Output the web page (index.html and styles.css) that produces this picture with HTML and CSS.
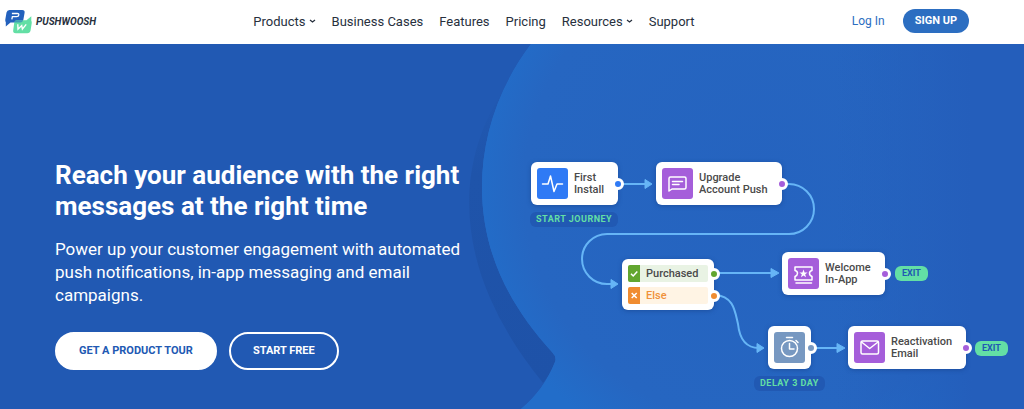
FILE: index.html
```html
<!DOCTYPE html>
<html lang="en">
  <head>
    <meta charset="UTF-8" />
    <meta name="viewport" content="width=device-width, initial-scale=1.0" />
    <title>Pushwoosh</title>
    <link rel="stylesheet" href="styles.css">
  </head>
  <body>
    <header class="header">
      <a class="logo" href="#">
        <svg class="logo-mark" viewBox="0 0 27 25" aria-hidden="true">
          <path d="M4.500 1H17.200Q20 1 19.600 3.800L18.400 10.600Q17.900 13.500 15 13.500H5.500L.8 17.400V13.200Q0 12.500.3 10.600L1.500 3.600Q2 1 4.500 1Z" fill="#2361bd" />
          <path d="M11.500 11.300H21.500L26.300 7.300V12Q27 12.600 26.700 14.300L25.600 21.200Q25.100 24.200 22.200 24.200H10.800Q7.700 24.200 8.200 21.300L9.200 14Q9.500 11.300 11.500 11.300Z" fill="#63dfa5" />
          <path d="M11.500 11.300H18.200Q17.400 13.500 15 13.500H9.300Q9.700 11.300 11.500 11.300Z" fill="#419fb5" />
          <path d="M6.800 10.300L7.400 7.700H11.600Q13.600 7.700 13.800 6T12.100 4.500H6.900" fill="none" stroke="#fff" stroke-width="1.300" />
          <path d="M12.800 15.200L13 20.200L16.700 16.600L17.400 20.200L21.200 15.400" fill="none" stroke="#fff" stroke-width="1.400" />
        </svg>
        <span>PUSHWOOSH</span>
      </a>
      <nav class="nav">
        <a href="#">Products
          <svg class="chevron" viewBox="0 0 7 4" aria-hidden="true"><path d="M1 1L3.500 3L6 1" /></svg>
        </a>
        <a href="#">Business Cases</a>
        <a href="#">Features</a>
        <a href="#">Pricing</a>
        <a href="#">Resources
          <svg class="chevron" viewBox="0 0 7 4" aria-hidden="true"><path d="M1 1L3.500 3L6 1" /></svg>
        </a>
        <a href="#">Support</a>
      </nav>
      <div class="account">
        <a class="login" href="#">Log In</a>
        <a class="signup" href="#">SIGN UP</a>
      </div>
    </header>

    <main class="hero">
      <section class="copy">
        <h1>Reach your audience with the right messages at the right time</h1>
        <p>Power up your customer engagement with automated push notifications, in-app messaging and email campaigns.</p>
        <div class="actions">
          <a class="btn btn-solid" href="#">GET A PRODUCT TOUR</a>
          <a class="btn btn-outline" href="#">START FREE</a>
        </div>
      </section>

      <section class="journey">
        <!-- big speech bubble behind the diagram -->
        <svg class="bubble" viewBox="0 0 584 365" preserveAspectRatio="xMinYMin slice" aria-hidden="true">
          <defs>
            <radialGradient id="bubbleFill" gradientUnits="userSpaceOnUse" cx="322" cy="143" r="290">
              <stop offset="0" stop-color="#2563bf" />
              <stop offset="0.820" stop-color="#2666c1" />
              <stop offset="1" stop-color="#226dc9" />
            </radialGradient>
            <linearGradient id="bubbleShade" x1="0" y1="0" x2="1" y2="0">
              <stop offset="0.450" stop-color="#245ebb" stop-opacity="0" />
              <stop offset="0.850" stop-color="#245ebb" />
            </linearGradient>
            <linearGradient id="shadowFill" x1="0" y1="0" x2="0" y2="1">
              <stop offset="0" stop-color="#1f55ab" stop-opacity="0" />
              <stop offset="0.300" stop-color="#1f54aa" />
              <stop offset="1" stop-color="#1e52a8" />
            </linearGradient>
          </defs>
          <path d="M66 42C20 110 20 185 50 254Q68 296 103 339L120 316L60 150Z" fill="url(#shadowFill)" />
          <path id="bubbleShape" d="M91 0C58 44 42 94 42 143C42 209 70 262 112 308Q117 313 115 318Q104 346 81 365H584V0Z" fill="url(#bubbleFill)" />
          <use href="#bubbleShape" />
          <rect x="240" y="0" width="344" height="365" fill="url(#bubbleShade)" />
        </svg>

        <svg class="links" viewBox="0 0 512 365" aria-hidden="true">
          <g class="wires">
            <path d="M107 140H134" />
            <path d="M269 140H277A25 25 0 0 1 277 190H95A25 25 0 0 0 95 240H100" />
            <path d="M203 229H262" />
            <path d="M203 251C222 252 223 268 226 280C228 299 237 304 247 304" />
            <path d="M300 304H327" />
          </g>
          <g class="arrows">
            <path d="M133 135.500L140 140L133 144.500Z" />
            <path d="M99 235.500L106 240L99 244.500Z" />
            <path d="M259 224.500L267 229L259 233.500Z" />
            <path d="M245 299.500L252 304L245 308.500Z" />
            <path d="M325 299.500L333 304L325 308.500Z" />
          </g>
        </svg>

        <div class="node node-install">
          <svg class="icon icon-blue" viewBox="0 0 31 31" aria-hidden="true">
            <path d="M5.500 16H11L13.500 8L17 23.500L20 16H25.500" />
          </svg>
          <span>First<br>Install</span>
          <i class="port port-blue"></i>
        </div>
        <span class="tag tag-start">START JOURNEY</span>

        <div class="node node-upgrade">
          <svg class="icon icon-purple" viewBox="0 0 31 31" aria-hidden="true">
            <path d="M7 23V10.500Q7 9 8.500 9H22.500Q24 9 24 10.500V19.500Q24 21 22.500 21H10L7 23Z" />
            <path d="M10.500 13.500H20.500M10.500 16.500H17" />
          </svg>
          <span>Upgrade<br>Account Push</span>
          <i class="port port-purple"></i>
        </div>

        <ul class="node node-split">
          <li class="row row-yes">
            <svg class="mark" viewBox="0 0 12 17" aria-hidden="true"><path d="M3 8.700L5.200 11L9.300 6.500" /></svg>
            <span>Purchased</span>
            <i class="port port-green"></i>
          </li>
          <li class="row row-no">
            <svg class="mark" viewBox="0 0 12 17" aria-hidden="true"><path d="M3.700 6L8.700 11M8.700 6L3.700 11" /></svg>
            <span>Else</span>
            <i class="port port-orange"></i>
          </li>
        </ul>

        <div class="node node-welcome">
          <svg class="icon icon-purple" viewBox="0 0 31 31" aria-hidden="true">
            <path d="M7 9H24V12.500Q21.500 13 21.500 15.300T24 18.500V22H7V18.500Q9.500 17.500 9.500 15.300T7 12.500ZM8 25H23.500" />
            <path class="filled" d="M15.500 11.500L16.600 14.400L19.600 14.500L17.200 16.300L18 19.200L15.500 17.500L13 19.200L13.800 16.300L11.400 14.500L14.400 14.400Z" />
          </svg>
          <span>Welcome<br>In-App</span>
          <i class="port port-purple"></i>
        </div>
        <span class="exit exit-app">EXIT</span>

        <div class="node node-delay">
          <svg class="icon icon-slate" viewBox="0 0 31 31" aria-hidden="true">
            <circle cx="15.500" cy="16.500" r="8" />
            <path d="M15.500 11.500V17H20M12.500 5.500H18.500M22 8.500L24 10.500" />
          </svg>
          <i class="port port-slate"></i>
        </div>
        <span class="tag tag-delay">DELAY 3 DAY</span>

        <div class="node node-email">
          <svg class="icon icon-purple" viewBox="0 0 31 31" aria-hidden="true">
            <rect x="7" y="9" width="17.500" height="13" rx="1.500" />
            <path d="M7.500 10L15.700 16.500L24 10" />
          </svg>
          <span>Reactivation<br>Email</span>
          <i class="port port-purple"></i>
        </div>
        <span class="exit exit-email">EXIT</span>
      </section>
    </main>
  </body>
</html>
```
FILE: styles.css
```css
* {
  box-sizing: border-box;
}
body {
  margin: 0;
  font-family: Roboto, Arial, sans-serif;
  color: #27303d;
  background: #2159b3;
}
a {
  color: inherit;
  text-decoration: none;
}
.header {
  display: flex;
  align-items: center;
  justify-content: space-between;
  min-height: 44px;
  padding: 0 55px 2px 5px;
  background: #fff;
}
.logo {
  display: flex;
  align-items: center;
  gap: 4px;
  font-size: 10px;
  font-weight: 700;
  font-style: italic;
}
.logo-mark {
  width: 27px;
  height: 25px;
}
.nav {
  display: flex;
  gap: 16px;
  font-size: 13px;
}
.nav a {
  display: flex;
  align-items: center;
  gap: 3px;
}
.chevron {
  width: 7px;
  height: 4px;
  fill: none;
  stroke: #27303d;
  stroke-width: 1.3;
}
.account {
  display: flex;
  align-items: center;
  gap: 18px;
}
.login {
  font-size: 12px;
  color: #2c6ec1;
}
.signup {
  padding: 0 12px;
  border-radius: 12px;
  font-size: 11px;
  font-weight: 700;
  line-height: 24px;
  color: #fff;
  background: #2c6ec1;
}

.hero {
  display: grid;
  grid-template-columns: 1fr 1fr;
  min-height: calc(100vh - 44px);
  overflow: hidden;
  color: #fff;
}
.copy {
  position: relative;
  z-index: 1;
  padding: 116px 40px 39px 55px;
}
h1 {
  margin: 0;
  font-size: 26px;
  font-weight: 700;
  line-height: 31px;
}
.copy p {
  margin: 16px 0 25px;
  font-size: 17px;
  line-height: 23px;
}
.actions {
  display: flex;
  gap: 12px;
}
.btn {
  padding: 0 22px;
  border: 2px solid #fff;
  border-radius: 19px;
  font-size: 11px;
  font-weight: 700;
  line-height: 34px;
}
.btn-solid {
  color: #2159b3;
  background: #fff;
}

/* journey diagram */
.journey {
  position: relative;
}
.bubble {
  position: absolute;
  top: 0;
  left: -72px;
  width: calc(100% + 72px);
  height: 100%;
}
.links {
  position: absolute;
  top: 0;
  left: 0;
  width: 512px;
  height: 365px;
}
.wires {
  fill: none;
  stroke: #66b5f6;
  stroke-width: 2;
}
.arrows {
  fill: #66b5f6;
  stroke: #66b5f6;
  stroke-linejoin: round;
}
.node {
  position: absolute;
  display: flex;
  align-items: center;
  gap: 6px;
  margin: 0;
  padding: 6px 14px 6px 6px;
  border-radius: 6px;
  font-size: 11px;
  font-weight: 500;
  line-height: 12px;
  white-space: nowrap;
  color: #4a4a4a;
  background: #fff;
  box-shadow: 0 1px 4px rgba(20, 60, 130, 0.5);
}
.node-install {
  left: 19px;
  top: 118px;
}
.node-upgrade {
  left: 144px;
  top: 118px;
}
.node-split {
  left: 110px;
  top: 215px;
  flex-direction: column;
  align-items: stretch;
  gap: 5px;
  padding-right: 6px;
  list-style: none;
}
.node-welcome {
  left: 270px;
  top: 208px;
}
.node-delay {
  left: 256px;
  top: 282px;
  padding-right: 6px;
}
.node-email {
  left: 336px;
  top: 282px;
}
.icon {
  width: 31px;
  height: 31px;
  border-radius: 3px;
  fill: none;
  stroke: #fff;
  stroke-width: 1.5;
  stroke-linecap: round;
  stroke-linejoin: round;
}
.icon .filled {
  fill: #fff;
  stroke: none;
}
.icon-blue {
  background: #2f7af5;
}
.icon-purple {
  background: #a55eda;
}
.icon-slate {
  background: #7798c1;
}
.port {
  position: absolute;
  top: 50%;
  right: -6px;
  width: 12px;
  height: 12px;
  margin-top: -6px;
  border: 3px solid #fff;
  border-radius: 50%;
}
.port-blue {
  background: #2f7af5;
}
.port-purple {
  background: #a55eda;
}
.port-slate {
  background: #7798c1;
}
.row {
  position: relative;
  display: flex;
  gap: 6px;
  padding-right: 10px;
  border-radius: 2px;
  line-height: 17px;
}
.row .port {
  right: -12px;
}
.row-yes {
  background: #e9f3e4;
}
.row-yes .mark,
.port-green {
  background: #62a62f;
}
.row-no {
  color: #f0913a;
  background: #fff4e4;
}
.row-no .mark,
.port-orange {
  background: #f08c30;
}
.mark {
  width: 12px;
  height: 17px;
  border-radius: 2px 0 0 2px;
  fill: none;
  stroke: #fff;
  stroke-width: 1.5;
}
.tag,
.exit {
  position: absolute;
  padding: 0 6px;
  border-radius: 6px;
  font-size: 9px;
  font-weight: 700;
  line-height: 15px;
  white-space: nowrap;
}
.tag {
  letter-spacing: 0.5px;
  color: #63dfa5;
  background: #2159b3;
}
.exit {
  padding: 0 7px;
  color: #2159b3;
  background: #63dfa5;
}
.tag-start {
  left: 18px;
  top: 168px;
}
.tag-delay {
  left: 242px;
  top: 332px;
}
.exit-app {
  left: 383px;
  top: 222px;
}
.exit-email {
  left: 463px;
  top: 297px;
}
```
